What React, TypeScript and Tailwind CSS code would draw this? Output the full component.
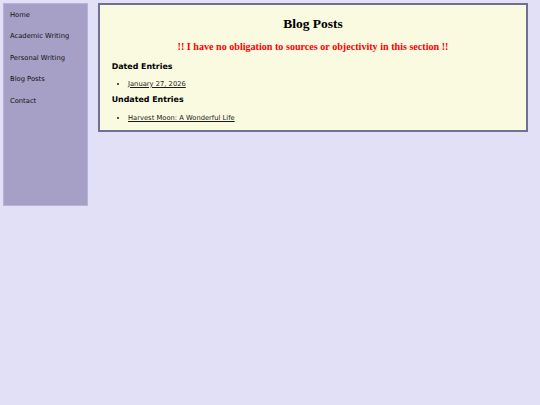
import React from "react";

const navItems = ["Home", "Academic Writing", "Personal Writing", "Blog Posts", "Contact"];

export default function App() {
  return (
    <div className="min-h-[405px] w-full bg-[#e2e0f7] p-[3px] flex items-start gap-[10px] font-['DejaVu_Sans',Verdana,sans-serif]">
      <nav className="w-[85px] h-[203px] shrink-0 bg-[#a6a0c6] border border-[#b8b3d6] pl-[6px] pt-[1px]">
        <ul className="flex flex-col">
          {navItems.map((item) => (
            <li key={item} className="text-[6.75px] leading-[21.45px] text-[#111111] whitespace-nowrap">
              <a href="#">{item}</a>
            </li>
          ))}
        </ul>
      </nav>
      <main className="w-[430px] shrink-0 bg-[#fafae0] border-2 border-[#726f96] pt-[9.4px] pb-[7.5px] pl-[11.7px] pr-[11.7px]">
        <h1 className="font-['Liberation_Serif','Times_New_Roman',serif] font-bold text-[13.5px] leading-[20px] text-center text-black">
          Blog Posts
        </h1>
        <h2 className="mt-[4.2px] font-['Liberation_Serif','Times_New_Roman',serif] font-bold text-[10.125px] leading-[16px] text-center text-[#ff0000]">
          !! I have no obligation to sources or objectivity in this section !!
        </h2>
        <h3 className="mt-[7.67px] font-bold text-[7.9px] leading-[10px] text-black">Dated Entries</h3>
        <ul className="mt-[6.39px] list-disc pl-[16.3px]">
          <li className="text-[6.75px] leading-[10px] text-[#1a1a1a]">
            <a href="#" className="underline">January 27, 2026</a>
          </li>
        </ul>
        <h3 className="mt-[6.4px] font-bold text-[7.9px] leading-[10px] text-black">Undated Entries</h3>
        <ul className="mt-[7.9px] list-disc pl-[16.3px]">
          <li className="text-[6.75px] leading-[10px] text-[#1a1a1a]">
            <a href="#" className="underline">Harvest Moon: A Wonderful Life</a>
          </li>
        </ul>
      </main>
    </div>
  );
}
